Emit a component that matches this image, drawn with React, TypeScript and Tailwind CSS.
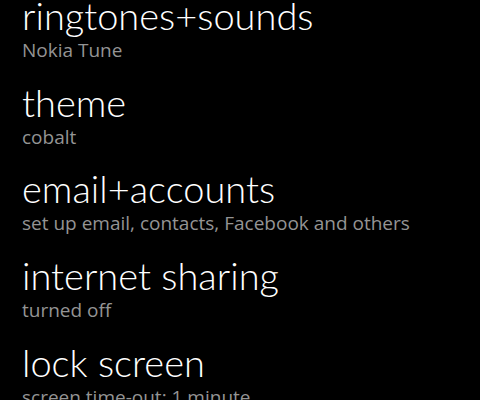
import React from 'react';

const items = [
  { title: 'ringtones+sounds', sub: 'Nokia Tune' },
  { title: 'theme', sub: 'cobalt' },
  { title: 'email+accounts', sub: 'set up email, contacts, Facebook and others' },
  { title: 'internet sharing', sub: 'turned off' },
  { title: 'lock screen', sub: 'screen time-out: 1 minute' },
];

export default function App() {
  return (
    <div
      className="w-[480px] h-[400px] overflow-hidden bg-black text-white"
      style={{ fontFamily: '"Open Sans", "Noto Sans", sans-serif' }}
    >
      <div className="-mt-[7px] flex flex-col pl-[22px]">
        {items.map((item) => (
          <div key={item.title} className="h-[86.7px] flex flex-col">
            <div className="font-['Lato',sans-serif] text-[38px] leading-[45px] font-light">{item.title}</div>
            <div className="text-[19px] leading-[24px] text-[#949494]">{item.sub}</div>
          </div>
        ))}
      </div>
    </div>
  );
}
